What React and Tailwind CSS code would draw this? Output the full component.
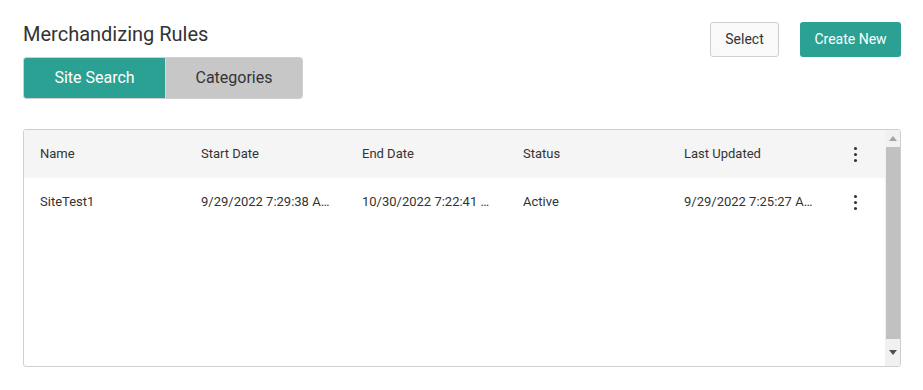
import React from "react";

const cols = ["Name", "Start Date", "End Date", "Status", "Last Updated"];
const row = ["SiteTest1", "9/29/2022 7:29:38 AM", "10/30/2022 7:22:41 AM", "Active", "9/29/2022 7:25:27 AM"];

function Kebab() {
  return (
    <div className="flex flex-col items-center gap-[3px]">
      <span className="w-[3px] h-[3px] rounded-full bg-[#333]" />
      <span className="w-[3px] h-[3px] rounded-full bg-[#333]" />
      <span className="w-[3px] h-[3px] rounded-full bg-[#333]" />
    </div>
  );
}

export default function App() {
  return (
    <div className="w-[923px] h-[390px] bg-white pl-[23px] pr-[22px] pt-[20px] text-[#333]" style={{ fontFamily: "Roboto, 'Liberation Sans', sans-serif" }}>
      <div className="flex justify-between">
        <div>
          <h1 className="text-[20px] leading-[28px] font-normal text-[#333]">Merchandizing Rules</h1>
          <div className="mt-[9px] flex w-[280px] h-[42px] rounded-[3px] overflow-hidden border border-[#d0d0d0]">
            <button className="w-[141px] bg-[#2ba193] text-white text-[16px]">Site Search</button>
            <button className="flex-1 bg-[#c7c7c7] text-[#333] text-[16px] border-l border-[#d8d8d8]">Categories</button>
          </div>
        </div>
        <div className="flex items-start gap-[21px] pt-[2px]">
          <button className="h-[35px] w-[69px] border border-[#cfcfcf] bg-[#f9f9f9] rounded-[3px] text-[14px] text-[#333]">Select</button>
          <button className="h-[35px] w-[101px] bg-[#2ba193] rounded-[3px] text-[14px] text-white">Create New</button>
        </div>
      </div>

      <div className="mt-[30px] w-[878px] h-[238px] border border-[#cfcfcf] rounded-[3px] flex overflow-hidden">
        <div className="flex-1 flex flex-col">
          <div className="h-[48px] bg-[#f5f5f5] flex items-center text-[13px]">
            {cols.map((c) => (
              <div key={c} className="w-[161px] px-4 truncate">{c}</div>
            ))}
            <div className="flex-1 flex justify-center pr-[3px]"><Kebab /></div>
          </div>
          <div className="h-[48px] flex items-center text-[13px]">
            {row.map((c, i) => (
              <div key={i} className="w-[161px] px-4 truncate">{c}</div>
            ))}
            <div className="flex-1 flex justify-center pr-[3px]"><Kebab /></div>
          </div>
        </div>
        <div className="w-[15px] bg-[#f1f1f1] flex flex-col items-center">
          <div className="h-[17px] flex items-center justify-center">
            <svg width="8" height="5" viewBox="0 0 8 5"><path d="M4 0 L8 5 L0 5 Z" fill="#a3a3a3" /></svg>
          </div>
          <div className="w-[14px] h-[192px] bg-[#c1c1c1]" />
          <div className="flex-1 flex items-center justify-center">
            <svg width="8" height="5" viewBox="0 0 8 5"><path d="M0 0 L8 0 L4 5 Z" fill="#505050" /></svg>
          </div>
        </div>
      </div>
    </div>
  );
}
